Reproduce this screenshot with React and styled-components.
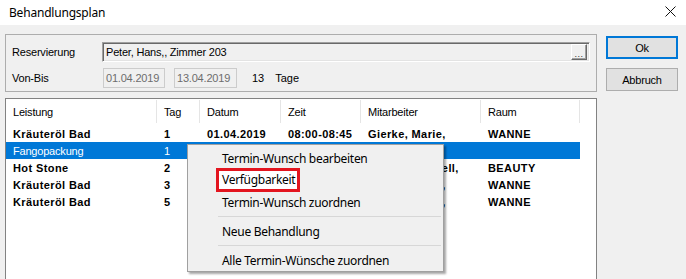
import React from "react";
import styled, { createGlobalStyle } from "styled-components";

const GlobalStyle = createGlobalStyle`
  html, body { margin: 0; padding: 0; background: #ffffff; }
  * { box-sizing: border-box; }
`;

const Window = styled.div`
  position: relative;
  width: 686px;
  height: 279px;
  overflow: hidden;
  background: #f0f0f0;
  font-family: "Liberation Sans", Arial, sans-serif;
  font-size: 11px;
  color: #000;
`;

const TitleBar = styled.div`
  height: 25px;
  background: #ffffff;
  display: flex;
  align-items: center;
  justify-content: space-between;
  padding: 0 9px 1px 9px;
`;

const Title = styled.div`
  font-family: "Noto Sans", "Open Sans", sans-serif;
  font-size: 12px;
  letter-spacing: -0.2px;
  color: #000;
`;

const CloseIcon = styled.svg`
  width: 11px;
  height: 11px;
  margin-right: 1px;
  margin-top: -2px;
`;

const Body = styled.div`
  display: flex;
  align-items: flex-start;
`;

const MainColumn = styled.div`
  width: 597px;
  padding-left: 5px;
  padding-top: 9px;
  display: flex;
  flex-direction: column;
`;

const GroupBox = styled.div`
  height: 58px;
  border: 1px solid #adadad;
  padding: 7px 6px 0 6px;
  display: grid;
  grid-template-columns: 90px 1fr;
  grid-auto-rows: 20px;
  row-gap: 6px;
  align-items: center;
`;

const FieldLabel = styled.div`
  letter-spacing: -0.2px;
  white-space: nowrap;
`;

const LookupField = styled.div`
  height: 20px;
  display: flex;
  align-items: center;
  justify-content: space-between;
  background: #f0f0f0;
  border-top: 1px solid #a0a0a0;
  border-left: 1px solid #a0a0a0;
  border-bottom: 1px solid #ffffff;
  border-right: 1px solid #ffffff;
  box-shadow: inset 1px 1px 0 #696969, inset -1px -1px 0 #e3e3e3;
  padding: 0 2px 0 3px;
  letter-spacing: -0.2px;
`;

const EllipsisButton = styled.div`
  width: 16px;
  height: 16px;
  background: #f0f0f0;
  border-top: 1px solid #ffffff;
  border-left: 1px solid #ffffff;
  border-right: 1px solid #696969;
  border-bottom: 1px solid #696969;
  box-shadow: inset -1px -1px 0 #a0a0a0;
  display: flex;
  align-items: flex-end;
  justify-content: center;
  font-size: 9px;
  line-height: 10px;
  color: #333;
  letter-spacing: 0.5px;
`;

const DateRow = styled.div`
  display: flex;
  align-items: center;
  height: 20px;
`;

const DateBox = styled.div`
  width: ${(p) => p.$w}px;
  height: 20px;
  margin-left: ${(p) => p.$ml || 0}px;
  border: 1px solid #cccccc;
  color: #6d6d6d;
  display: flex;
  align-items: center;
  padding-left: 2px;
  letter-spacing: -0.2px;
`;

const DaysText = styled.span`
  margin-left: ${(p) => p.$ml}px;
`;

const ListView = styled.div`
  margin-top: 6px;
  height: 200px;
  background: #ffffff;
  border: 1px solid #828282;
`;

const columns = "151px 43px 81px 80px 120px 99px";

const HeaderRow = styled.div`
  display: grid;
  grid-template-columns: ${columns};
  height: 26px;
  padding-top: 1px;
  align-items: start;
`;

const HeaderCell = styled.div`
  height: 23px;
  border-right: 1px solid #e5e5e5;
  display: flex;
  align-items: center;
  padding-left: 7px;
  padding-top: 1px;
  letter-spacing: -0.2px;
`;

const Row = styled.div`
  display: grid;
  grid-template-columns: ${columns};
  height: 17px;
  width: 574px;
  background: ${(p) => (p.$selected ? "#0078d7" : "transparent")};
  color: ${(p) => (p.$selected ? "#ffffff" : "#000000")};
  font-weight: ${(p) => (p.$bold ? 700 : 400)};
  letter-spacing: ${(p) => (p.$bold ? "0.4px" : "-0.2px")};
  align-items: center;
`;

const Cell = styled.div`
  padding-left: 7px;
  white-space: nowrap;
  overflow: hidden;
`;

const ButtonColumn = styled.div`
  margin-left: 9px;
  padding-top: 11px;
  display: flex;
  flex-direction: column;
  gap: 9px;
`;

const DialogButton = styled.div`
  width: 72px;
  height: 23px;
  background: #e1e1e1;
  border: ${(p) => (p.$default ? "2px solid #0078d7" : "1px solid #adadad")};
  display: flex;
  align-items: center;
  justify-content: center;
  letter-spacing: -0.2px;
`;

const ContextMenu = styled.div`
  position: absolute;
  left: 187px;
  top: 144px;
  width: 257px;
  height: 128px;
  background: #f0f0f0;
  border: 1px solid #a0a0a0;
  box-shadow: 2px 2px 2px rgba(0, 0, 0, 0.35);
  padding: 2px 2px 0 2px;
  font-family: "Noto Sans", "Open Sans", sans-serif;
  font-size: 12px;
  letter-spacing: -0.3px;
`;

const MenuItem = styled.div`
  height: 22px;
  display: flex;
  align-items: center;
  padding-left: 32px;
  white-space: nowrap;
`;

const Highlighted = styled.span`
  display: inline-block;
  line-height: 16px;
  padding: 1px 2px 1px 3px;
  margin-left: -3px;
  background: #ffffff;
  outline: 3px solid #e3151f;
`;

const MenuSeparator = styled.div`
  height: 1px;
  margin: 3px 0 3px 28px;
  background: #d7d7d7;
`;

const rows = [
  { selected: false, bold: true, cells: ["Kräuteröl Bad", "1", "01.04.2019", "08:00-08:45", "Gierke, Marie,", "WANNE"] },
  { selected: true, bold: false, cells: ["Fangopackung", "1", "", "", "", ""] },
  { selected: false, bold: true, cells: ["Hot Stone", "2", "", "", "Schubert, Ariell,", "BEAUTY"] },
  { selected: false, bold: true, cells: ["Kräuteröl Bad", "3", "", "", "Gierke, Marie,", "WANNE"] },
  { selected: false, bold: true, cells: ["Kräuteröl Bad", "5", "", "", "Gierke, Marie,", "WANNE"] },
];

const headers = ["Leistung", "Tag", "Datum", "Zeit", "Mitarbeiter", "Raum"];

export default function App() {
  return (
    <>
      <GlobalStyle />
      <Window>
        <TitleBar>
          <Title>Behandlungsplan</Title>
          <CloseIcon viewBox="0 0 11 11">
            <path d="M0.5 0.5 L10.5 10.5 M10.5 0.5 L0.5 10.5" stroke="#111" strokeWidth="1" fill="none" />
          </CloseIcon>
        </TitleBar>
        <Body>
          <MainColumn>
            <GroupBox>
              <FieldLabel>Reservierung</FieldLabel>
              <LookupField>
                <span>Peter, Hans,, Zimmer 203</span>
                <EllipsisButton>...</EllipsisButton>
              </LookupField>
              <FieldLabel>Von-Bis</FieldLabel>
              <DateRow>
                <DateBox $w={62} $ml={1}>01.04.2019</DateBox>
                <DateBox $w={63} $ml={9}>13.04.2019</DateBox>
                <DaysText $ml={15}>13</DaysText>
                <DaysText $ml={11}>Tage</DaysText>
              </DateRow>
            </GroupBox>
            <ListView>
              <HeaderRow>
                {headers.map((h) => (
                  <HeaderCell key={h}>{h}</HeaderCell>
                ))}
              </HeaderRow>
              {rows.map((r, i) => (
                <Row key={i} $selected={r.selected} $bold={r.bold}>
                  {r.cells.map((c, j) => (
                    <Cell key={j}>{c}</Cell>
                  ))}
                </Row>
              ))}
            </ListView>
          </MainColumn>
          <ButtonColumn>
            <DialogButton $default>Ok</DialogButton>
            <DialogButton>Abbruch</DialogButton>
          </ButtonColumn>
        </Body>
        <ContextMenu>
          <MenuItem>Termin-Wunsch bearbeiten</MenuItem>
          <MenuItem>
            <Highlighted>Verfügbarkeit</Highlighted>
          </MenuItem>
          <MenuItem>Termin-Wunsch zuordnen</MenuItem>
          <MenuSeparator />
          <MenuItem>Neue Behandlung</MenuItem>
          <MenuSeparator />
          <MenuItem>Alle Termin-Wünsche zuordnen</MenuItem>
        </ContextMenu>
      </Window>
    </>
  );
}
